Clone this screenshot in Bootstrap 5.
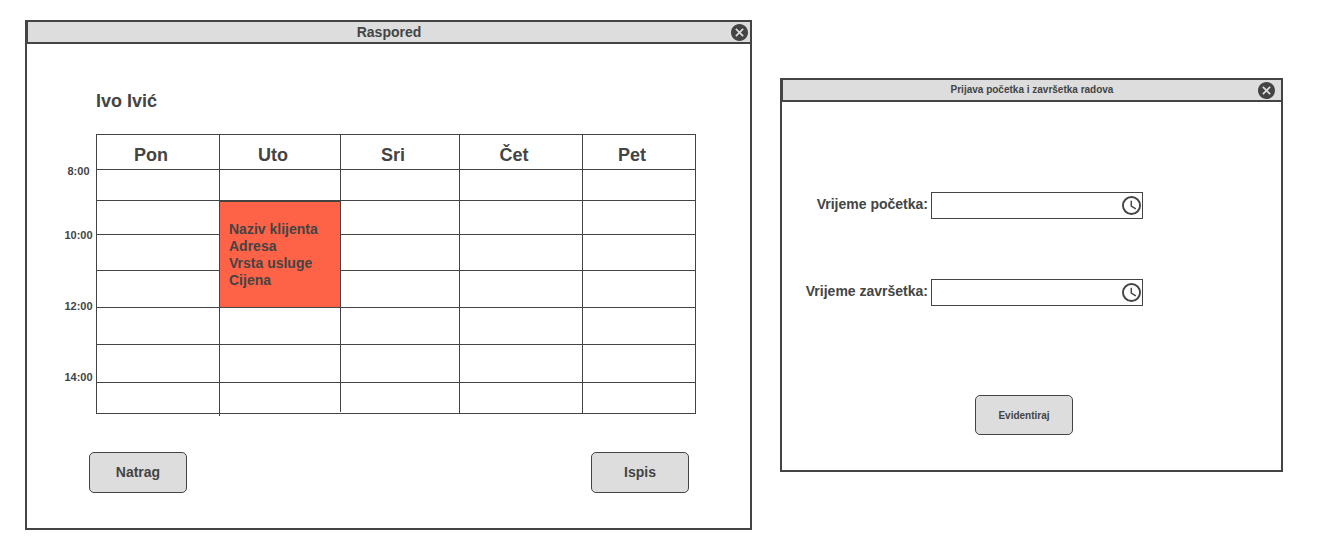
<!DOCTYPE html>
<html lang="hr">
<head>
<meta charset="utf-8">
<meta name="viewport" content="width=device-width, initial-scale=1">
<title>Raspored</title>
<link href="https://cdn.jsdelivr.net/npm/bootstrap@5.3.0/dist/css/bootstrap.min.css" rel="stylesheet">
<style>
  :root { --ink: #444; --bar: #ddd; }
  body { font-family: "Liberation Sans", Arial, sans-serif; font-size: 14px; font-weight: 700; color: var(--ink); background: #fff; }
  .desk { display: grid; grid-template-columns: 727fr 503fr; gap: 28px; padding: 20px 37px 20px 25px; }
  .win { border: 2px solid var(--ink); background: #fff; }
  .win-bar { height: 22px; background: var(--bar); border-bottom: 2px solid var(--ink); border-left: 1px solid var(--ink); }
  .win-bar h2 { font-size: 14px; line-height: 20px; font-weight: 700; }
  .win-bar .fine { font-size: 10px; }
  .win-close { right: 2px; width: 17px; height: 17px; color: var(--ink); }
  svg { display: block; fill: currentColor; }
  .person { font-size: 18px; line-height: 24px; font-weight: 700; margin: 45px 0 21px 35px; }
  .plan-body { padding: 0 54px 35px 34px; }
  .hours { width: 35px; padding-top: 31px; font-size: 11px; line-height: 12px; }
  .hours li { height: 71px; }
  .hours li:first-child { height: 64px; }
  .hours li:last-child { height: auto; }
  .plan { table-layout: fixed; border-collapse: separate; border-spacing: 0; }
  .plan th, .plan td { border: 0 solid var(--ink); border-width: 1px 0 0 1px; padding: 0; }
  .plan tr > .edge { border-right-width: 1px; }
  .plan tbody tr:last-child td { border-bottom-width: 1px; }
  .plan th { font-size: 18px; line-height: 24px; padding: 5px 14px 0 0; text-align: center; }
  .plan .visit { border-top-width: 2px; background: #ff6347; padding-left: 9px; line-height: 17px; vertical-align: middle; }
  .long-rule::after { content: ""; position: absolute; left: -1px; top: 100%; width: 1px; height: 3px; background: var(--ink); }
  .short-rule::after { content: ""; position: absolute; left: -1px; bottom: 0; width: 1px; height: 1px; background: #fff; }
  .plan th:nth-child(1), .plan th:nth-child(4) { width: 123px; }
  .plan th:nth-child(2) { width: 121px; }
  .plan th:nth-child(3) { width: 119px; }
  .plan th:nth-child(5) { width: 114px; }
  .plan thead tr { height: 35px; }
  .plan tbody tr { height: 37px; }
  .plan tbody tr:nth-child(1) { height: 31px; }
  .plan tbody tr:nth-child(2) { height: 34px; }
  .plan tbody tr:nth-child(3) { height: 36px; }
  .plan tbody tr:nth-child(6) { height: 38px; }
  .plan tbody tr:nth-child(7) { height: 32px; }
  .actions { padding: 38px 7px 0 28px; }
  .btn-plain { width: 98px; height: 41px; padding: 0; border: 1px solid var(--ink); border-radius: 5px; background: var(--bar); color: var(--ink); font-size: 14px; font-weight: 700; }
  .btn-plain:hover { background: #ccc; border-color: var(--ink); }
  .btn-plain.fine { height: 40px; font-size: 10px; }
  .entry { margin-top: 58px; }
  .entry-body { padding: 90px 0 35px; }
  .entry-row { display: grid; grid-template-columns: 149fr 212fr 138fr; margin-bottom: 60px; }
  .entry-row label { padding-right: 3px; line-height: 25px; text-align: right; white-space: nowrap; }
  .entry-row input { height: 27px; border: 1px solid var(--ink); border-radius: 0; padding: 0 24px 0 6px; font-size: 14px; color: var(--ink); }
  .clock { right: 2px; top: 4px; }
  .entry-send { padding: 29px 15px 0 0; line-height: 1; }
</style>
</head>
<body>
<main class="desk align-items-start">
  <section class="win" aria-labelledby="t1">
    <header class="win-bar position-relative d-flex align-items-center justify-content-center">
      <h2 id="t1" class="m-0">Raspored</h2>
      <button type="button" class="win-close btn p-0 border-0 position-absolute" aria-label="Zatvori">
        <svg width="17" height="17" viewBox="2 2 20 20"><path d="M12 2C6.47 2 2 6.47 2 12s4.47 10 10 10 10-4.47 10-10S17.53 2 12 2zm5 13.59L15.59 17 12 13.41 8.41 17 7 15.59 10.59 12 7 8.41 8.41 7 12 10.59 15.59 7 17 8.41 13.41 12 17 15.59z"/></svg>
      </button>
    </header>
    <div class="plan-body">
      <h1 class="person">Ivo Ivić</h1>
      <div class="d-flex align-items-start">
        <ol class="hours list-unstyled m-0 flex-shrink-0 text-center">
          <li>8:00</li><li>10:00</li><li>12:00</li><li>14:00</li>
        </ol>
        <table class="plan w-100">
          <thead>
            <tr><th scope="col">Pon</th><th scope="col">Uto</th><th scope="col">Sri</th><th scope="col">Čet</th><th scope="col" class="edge">Pet</th></tr>
          </thead>
          <tbody>
            <tr><td></td><td></td><td></td><td></td><td class="edge"></td></tr>
            <tr><td></td><td class="visit" rowspan="3">Naziv klijenta<br>Adresa<br>Vrsta usluge<br>Cijena</td><td></td><td></td><td class="edge"></td></tr>
            <tr><td></td><td></td><td></td><td class="edge"></td></tr>
            <tr><td></td><td></td><td></td><td class="edge"></td></tr>
            <tr><td></td><td></td><td></td><td></td><td class="edge"></td></tr>
            <tr><td></td><td></td><td></td><td></td><td class="edge"></td></tr>
            <tr><td></td><td class="long-rule position-relative"></td><td class="short-rule position-relative"></td><td></td><td class="edge"></td></tr>
          </tbody>
        </table>
      </div>
      <div class="actions d-flex justify-content-between">
        <button type="button" class="btn btn-plain">Natrag</button>
        <button type="button" class="btn btn-plain">Ispis</button>
      </div>
    </div>
  </section>

  <section class="win entry" aria-labelledby="t2">
    <header class="win-bar position-relative d-flex align-items-center justify-content-center">
      <h2 id="t2" class="fine m-0">Prijava početka i završetka radova</h2>
      <button type="button" class="win-close btn p-0 border-0 position-absolute me-1" aria-label="Zatvori">
        <svg width="17" height="17" viewBox="2 2 20 20"><path d="M12 2C6.47 2 2 6.47 2 12s4.47 10 10 10 10-4.47 10-10S17.53 2 12 2zm5 13.59L15.59 17 12 13.41 8.41 17 7 15.59 10.59 12 7 8.41 8.41 7 12 10.59 15.59 7 17 8.41 13.41 12 17 15.59z"/></svg>
      </button>
    </header>
    <form class="entry-body">
      <div class="entry-row">
        <label for="start">Vrijeme početka:</label>
        <div class="position-relative">
          <input id="start" type="text" class="form-control">
          <svg class="clock position-absolute" width="19" height="19" viewBox="2 2 20 20"><path fill-rule="evenodd" d="M12 2a10 10 0 1 0 0 20a10 10 0 1 0 0-20zM12 4a8 8 0 1 1 0 16a8 8 0 1 1 0-16z"/><path d="M12.5 7H11v6l5.25 3.15.75-1.23-4.5-2.67z"/></svg>
        </div>
      </div>
      <div class="entry-row">
        <label for="end">Vrijeme završetka:</label>
        <div class="position-relative">
          <input id="end" type="text" class="form-control">
          <svg class="clock position-absolute" width="19" height="19" viewBox="2 2 20 20"><path fill-rule="evenodd" d="M12 2a10 10 0 1 0 0 20a10 10 0 1 0 0-20zM12 4a8 8 0 1 1 0 16a8 8 0 1 1 0-16z"/><path d="M12.5 7H11v6l5.25 3.15.75-1.23-4.5-2.67z"/></svg>
        </div>
      </div>
      <div class="entry-send text-center">
        <button type="button" class="btn btn-plain fine">Evidentiraj</button>
      </div>
    </form>
  </section>
</main>
<script src="https://cdn.jsdelivr.net/npm/bootstrap@5.3.0/dist/js/bootstrap.bundle.min.js"></script>
</body>
</html>
